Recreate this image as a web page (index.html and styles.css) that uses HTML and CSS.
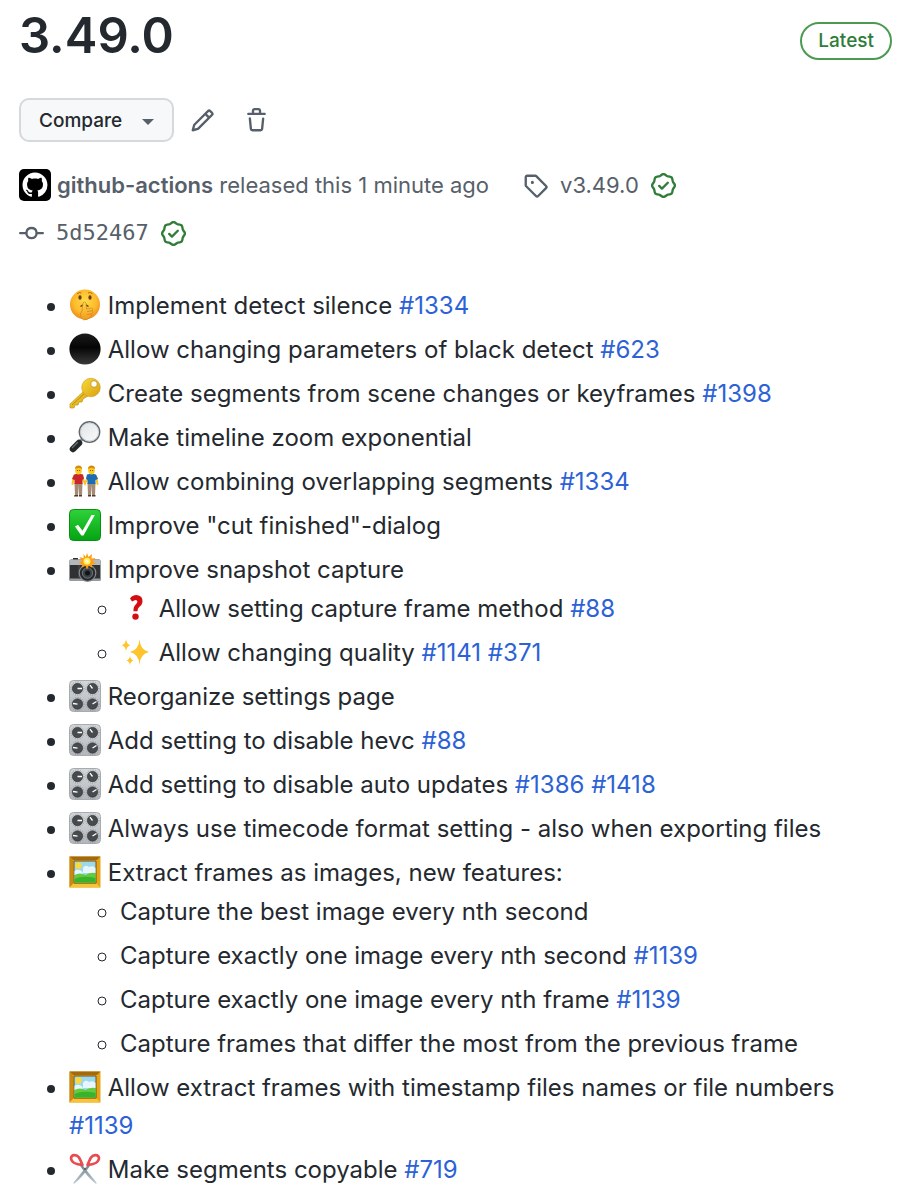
FILE: index.html
```html
<!doctype html>
<html lang="en">

<head>
  <meta charset="UTF-8" />
  <meta name="viewport" content="width=device-width, initial-scale=1.0" />
  <title>Release 3.49.0</title>
  <link rel="stylesheet" href="styles.css">
</head>

<body>
  <!-- shared icons -->
  <svg class="sprite" width="0" height="0" aria-hidden="true">
    <defs>
      <radialGradient id="g-face" cx=".5" cy=".4" r=".6">
        <stop offset="0" stop-color="#ffdc4a" />
        <stop offset=".65" stop-color="#fdb92b" />
        <stop offset="1" stop-color="#ee8a1d" />
      </radialGradient>
      <linearGradient id="g-hand" x1="0" y1="0" x2="0" y2="1">
        <stop offset="0" stop-color="#ffd84d" />
        <stop offset="1" stop-color="#f39a1c" />
      </linearGradient>
      <linearGradient id="g-black" x1="0" y1="0" x2="0" y2="1">
        <stop offset="0" stop-color="#1c1c1c" />
        <stop offset=".45" stop-color="#050505" />
        <stop offset="1" stop-color="#3a3a3a" />
      </linearGradient>
      <linearGradient id="g-gold" x1="0" y1="0" x2="1" y2="1">
        <stop offset="0" stop-color="#f8d935" />
        <stop offset="1" stop-color="#d9a013" />
      </linearGradient>
      <linearGradient id="g-green" x1="0" y1="0" x2="0" y2="1">
        <stop offset="0" stop-color="#2fd23a" />
        <stop offset="1" stop-color="#04a313" />
      </linearGradient>
      <linearGradient id="g-metal" x1="0" y1="0" x2="0" y2="1">
        <stop offset="0" stop-color="#d5d8db" />
        <stop offset="1" stop-color="#b3b7bb" />
      </linearGradient>
      <linearGradient id="g-lens" x1="0" y1="0" x2="1" y2="1">
        <stop offset="0" stop-color="#dfe3e6" />
        <stop offset="1" stop-color="#fbfcfc" />
      </linearGradient>
      <linearGradient id="g-blade" x1="0" y1="0" x2="0" y2="1">
        <stop offset="0" stop-color="#6f7f8b" />
        <stop offset="1" stop-color="#bccbd5" />
      </linearGradient>
    </defs>

    <symbol id="verified" viewBox="0 0 16 16">
      <path fill="currentColor" d="m9.585.52.929.68c.153.112.331.186.518.215l1.138.175a2.678 2.678 0 0 1 2.24 2.24l.174 1.139c.029.187.103.365.215.518l.68.928a2.677 2.677 0 0 1 0 3.17l-.68.928a1.174 1.174 0 0 0-.215.518l-.175 1.138a2.678 2.678 0 0 1-2.241 2.241l-1.138.175a1.17 1.17 0 0 0-.518.215l-.928.68a2.677 2.677 0 0 1-3.17 0l-.928-.68a1.174 1.174 0 0 0-.518-.215L3.83 14.41a2.678 2.678 0 0 1-2.24-2.24l-.175-1.138a1.17 1.17 0 0 0-.215-.518l-.68-.928a2.677 2.677 0 0 1 0-3.17l.68-.928c.112-.153.186-.331.215-.518l.175-1.14a2.678 2.678 0 0 1 2.24-2.24l1.139-.175c.187-.029.365-.103.518-.215l.928-.68a2.677 2.677 0 0 1 3.17 0ZM7.303 1.728l-.927.68a2.67 2.67 0 0 1-1.18.489l-1.137.174a1.179 1.179 0 0 0-.987.987l-.174 1.136a2.677 2.677 0 0 1-.489 1.18l-.68.928a1.18 1.18 0 0 0 0 1.394l.68.927c.256.348.424.753.489 1.18l.174 1.137c.078.509.478.909.987.987l1.136.174a2.67 2.67 0 0 1 1.18.489l.928.68c.414.305.979.305 1.394 0l.927-.68a2.67 2.67 0 0 1 1.18-.489l1.137-.174a1.18 1.18 0 0 0 .987-.987l.174-1.136a2.67 2.67 0 0 1 .489-1.18l.68-.928a1.176 1.176 0 0 0 0-1.394l-.68-.927a2.686 2.686 0 0 1-.489-1.18l-.174-1.137a1.179 1.179 0 0 0-.987-.987l-1.136-.174a2.677 2.677 0 0 1-1.18-.489l-.928-.68a1.176 1.176 0 0 0-1.394 0ZM11.28 6.78l-3.75 3.75a.75.75 0 0 1-1.06 0L4.72 8.78a.751.751 0 0 1 .018-1.042.751.751 0 0 1 1.042-.018L7 8.94l3.22-3.22a.751.751 0 0 1 1.042.018.751.751 0 0 1 .018 1.042Z" />
    </symbol>

    <symbol id="shush" viewBox="0 0 32 32">
      <circle cx="16" cy="15.5" r="15" fill="url(#g-face)" />
      <ellipse cx="11" cy="8.5" rx="1.6" ry="2.2" fill="#6b3d0c" />
      <ellipse cx="21" cy="8.5" rx="1.6" ry="2.2" fill="#6b3d0c" />
      <path d="M8 4.8q2.500-2 4.500-.8M19 4q2.500-1.200 4.500.8" fill="none" stroke="#b3701a" />
      <path d="M11.500 17.500q4-3.500 8 0" fill="none" stroke="#6b3d0c" stroke-width="1.300" />
      <path d="M14 14q1.500-2.500 3 0l.5 6 5-1q2 .5 1 2.500 1 1.500-.5 3-1 4.500-5 6-4 1.500-6-2-1.500-4 1-7z" fill="url(#g-hand)" stroke="#c98420" stroke-width=".7" />
      <path d="M18 22.500l5-.8M18 25.500l4.500-.7" stroke="#c98420" stroke-width=".8" />
    </symbol>

    <symbol id="black-circle" viewBox="0 0 32 32">
      <circle cx="16" cy="16" r="15.600" fill="url(#g-black)" />
    </symbol>

    <symbol id="key" viewBox="0 0 32 32">
      <path d="M16 13 1 27v4h4l1-3h3l1-3h3l1-3 5-3z" fill="url(#g-gold)" stroke="#b58a12" stroke-width=".6" />
      <path d="M3 28 17 15" stroke="#a87d10" stroke-width=".8" />
      <circle cx="22" cy="10.500" r="9.300" fill="url(#g-gold)" stroke="#c99c18" stroke-width=".6" />
      <circle cx="25" cy="7" r="3.300" fill="#fff" stroke="#c0920f" stroke-width=".8" />
    </symbol>

    <symbol id="magnifier" viewBox="0 0 32 32">
      <path d="m15 16-5 6" stroke="#8f969b" stroke-width="3" />
      <path d="m10 22-6 6" stroke="#25282b" stroke-width="6.500" stroke-linecap="round" />
      <path d="m8.500 21.500-5 5" stroke="#6c7175" stroke-width="1.200" stroke-linecap="round" />
      <circle cx="20.500" cy="11" r="10.200" fill="url(#g-lens)" stroke="#62686d" stroke-width="1.400" />
      <circle cx="20.500" cy="11" r="9" fill="none" stroke="#c5cace" stroke-width=".8" />
    </symbol>

    <symbol id="two-men" viewBox="0 0 32 32">
      <path d="M5.500 18h8l-.5 12.500H10L9.500 20 9 30.500H6zM18.500 18h8L26 30.500h-3L22.500 20 22 30.500h-3z" fill="#a38b74" />
      <path d="M5.500 30h3.600v1.500H5zM10 30h3v1.500h-3zM19 30h3v1.500h-3zM23 30h3.500v1.500H23z" fill="#4d3a2c" />
      <path d="M5 11.500 3.500 19M27 11.500l1.500 7.500M13.500 13l2.500 5.500 2.500-5.500" fill="none" stroke="#f8c51f" stroke-width="2" stroke-linecap="round" />
      <path d="M5 9.500q4.500-1.500 9 0l1 4-1.500 1.500v4h-8V15L3 14z" fill="#c9252b" />
      <path d="M18 9.500q4.500-1.500 9 0l2 4.500-2.500 1v4h-8v-4L17 13.500z" fill="#1b6cb4" />
      <ellipse cx="9.500" cy="5.200" rx="3.400" ry="4.200" fill="#fdca24" />
      <ellipse cx="22.500" cy="5.200" rx="3.400" ry="4.200" fill="#fdca24" />
      <path d="M6 4q0-3.500 3.500-3.500T13 4q-3.500-2-7 0zM19 4q0-3.500 3.500-3.500T26 4q-3.500-2-7 0z" fill="#d18d10" />
      <path d="M8 5.500h.8M10.300 5.500h.8M21 5.500h.8M23.300 5.500h.8" stroke="#5a3a0b" />
    </symbol>

    <symbol id="check" viewBox="0 0 32 32">
      <rect x=".5" y=".5" width="31" height="31" rx="4" fill="url(#g-green)" stroke="#078f12" />
      <path d="m6 17.500 3-1.800 4.500 6L22.500 6h3.300L14.500 26.500h-2.200z" fill="#fff" />
    </symbol>

    <symbol id="camera-flash" viewBox="0 0 32 32">
      <path d="M.5 8q0-1.500 1.500-1.500h2V5h5v1.500h21q1.500 0 1.500 1.500v19.500H.5z" fill="#2f3133" />
      <path d="M.5 12V8Q.5 6.500 2 6.500h28q1.500 0 1.500 1.500v4z" fill="#b5b8ba" />
      <path d="M.5 25.500h31v2H.5z" fill="#9a9ea1" />
      <path d="M10 12v13.500" stroke="#505356" />
      <circle cx="18.500" cy="20" r="8.300" fill="#26292b" stroke="#85898c" stroke-width="1.200" />
      <circle cx="18.500" cy="20" r="5.200" fill="#3b4349" stroke="#6c7378" />
      <circle cx="18.500" cy="20" r="2.500" fill="#111517" />
      <path d="m18 0 1.500 4L23 1l-.5 4.500 4-.5-2.700 3.300L27 11l-4.200.2L23.500 15l-3.700-2.300L18 16.500l-1.500-3.800-4 2L13.500 11l-4-.8 3.300-2.500L10.500 4l4.200 1.200L14.500 1l2.300 3z" fill="#ff9d13" />
      <circle cx="18" cy="8.200" r="3.500" fill="#fff05e" />
      <circle cx="18" cy="8.200" r="1.600" fill="#fffbd8" />
    </symbol>

    <symbol id="question" viewBox="0 0 32 32">
      <path d="M10 6.500Q12 3 16.500 3q6.500.5 6 7-.4 3-3.300 5-1.800 1.500-1.700 4.300h-4q-.3-4.500 2-6.500 2-1.700 1.900-3.300-.5-3.200-5.400 0z" fill="#d40d12" />
      <circle cx="15.500" cy="24.600" r="3.200" fill="#d40d12" />
    </symbol>

    <symbol id="sparkles" viewBox="0 0 32 32">
      <path d="M19.500 3.500q.8 10.500 9.500 12.500-8.700 2-9.500 12.500-.8-10.500-9.500-12.500 8.700-2 9.500-12.500z" fill="#fdc52b" />
      <path d="M6 3q.4 5.200 4.500 6.200Q6.400 10.200 6 15.500q-.4-5.300-4.500-6.300Q5.600 8.200 6 3zM10 19.500q.3 4.200 3.800 5-3.500.8-3.800 5-.3-4.200-3.800-5 3.500-.8 3.800-5z" fill="#fdc52b" />
    </symbol>

    <symbol id="knobs" viewBox="0 0 32 32">
      <rect x=".5" y=".5" width="31" height="31" rx="4" fill="url(#g-metal)" stroke="#a7abaf" />
      <g fill="none" stroke="#7d8286" stroke-width=".8" stroke-dasharray=".8 1.600">
        <circle cx="8.500" cy="8.500" r="6.600" />
        <circle cx="23.500" cy="8.500" r="6.600" />
        <circle cx="8.500" cy="24" r="6.600" />
        <circle cx="23.500" cy="24" r="6.600" />
      </g>
      <g fill="#484b4e" stroke="#2f3234" stroke-width=".6">
        <circle cx="8.500" cy="8.500" r="5.200" />
        <circle cx="23.500" cy="8.500" r="5.200" />
        <circle cx="8.500" cy="24" r="5.200" />
        <circle cx="23.500" cy="24" r="5.200" />
      </g>
      <path d="M8.500 8.500H13M23.500 8.500 21 5.200M8.500 24.200 4 23.500M23.500 24l4-2.500" stroke="#fff" stroke-width="1.300" />
    </symbol>

    <symbol id="picture" viewBox="0 0 32 32">
      <path d="M.5.500h31v31H.5z" fill="#e5a51b" />
      <path d="M.5.500h31L28 4H4z" fill="#a2690d" />
      <path d="M.5.500 4 4v24L.5 31.500z" fill="#c88a16" />
      <path d="M.5 31.500 4 28h24l3.500 3.500z" fill="#f6c33a" />
      <path d="M5 5h22v22H5z" fill="#9bd9ee" stroke="#7b500b" />
      <path d="M14 12q2-4 6-1 4-2 6.500 1v5H14zM5.500 15q4-3 8 1v3h-8z" fill="#e8f6fb" />
      <circle cx="9.500" cy="9.500" r="3.200" fill="#fbd93b" />
      <path d="M5.500 19q5-3 11 0 5-3 10-2v9.500h-21z" fill="#63cb3c" />
      <path d="M5.500 23q8-4 21-1v4.500h-21z" fill="#39b32a" />
    </symbol>

    <symbol id="scissors" viewBox="0 0 32 32">
      <path d="M12 10.500 27.500 29.500q.5 1.500-1 1Q19 25 10.500 12z" fill="url(#g-blade)" />
      <path d="M20 10.500 4.500 29.500q-.5 1.500 1 1Q13 25 21.500 12z" fill="url(#g-blade)" />
      <path d="M13.500 12q-1.500-4-3.500-7.500C7.500 1 2.500 1.500 2 5c0 4 5 6.500 11.500 7zM18.500 12q1.500-4 3.500-7.500C24.500 1 29.500 1.500 30 5c0 4-5 6.500-11.500 7z" fill="none" stroke="#e84b52" stroke-width="2.600" stroke-linejoin="round" />
      <circle cx="16" cy="16" r="1" fill="#4b565e" />
    </symbol>
  </svg>

  <main class="release">
    <header class="release-header">
      <h1 class="release-title">3.49.0</h1>
      <a class="label-latest" href="#latest">Latest</a>
    </header>

    <div class="actions">
      <button class="btn-compare" type="button">Compare <span class="caret"></span></button>
      <button class="btn-icon" type="button" aria-label="Edit">
        <svg class="icon" viewBox="0 0 16 16"><path fill="currentColor" d="M11.013 1.427a1.750 1.750 0 0 1 2.474 0l1.086 1.086a1.750 1.750 0 0 1 0 2.474l-8.610 8.610c-.21.21-.47.364-.756.445l-3.251.93a.75.75 0 0 1-.927-.928l.929-3.250c.081-.286.235-.547.445-.758l8.610-8.610Zm.176 4.823L9.750 4.810l-6.286 6.287a.253.253 0 0 0-.064.108l-.558 1.953 1.953-.558a.253.253 0 0 0 .108-.064Zm1.238-3.763a.25.25 0 0 0-.354 0L10.811 3.750l1.439 1.440 1.263-1.263a.25.25 0 0 0 0-.354Z" /></svg>
      </button>
      <button class="btn-icon" type="button" aria-label="Delete">
        <svg class="icon" viewBox="0 0 16 16"><path fill="currentColor" d="M11 1.750V3h2.250a.75.75 0 0 1 0 1.500H2.750a.75.75 0 0 1 0-1.500H5V1.750C5 .784 5.784 0 6.750 0h2.500C10.216 0 11 .784 11 1.750ZM4.496 6.675l.66 6.600a.25.25 0 0 0 .249.225h5.190a.25.25 0 0 0 .249-.225l.66-6.600a.75.75 0 0 1 1.492.149l-.66 6.600A1.748 1.748 0 0 1 10.595 15h-5.190a1.750 1.750 0 0 1-1.741-1.575l-.66-6.600a.75.75 0 1 1 1.492-.15ZM6.500 1.750V3h3V1.750a.25.25 0 0 0-.25-.25h-2.500a.25.25 0 0 0-.25.25Z" /></svg>
      </button>
    </div>

    <div class="meta">
      <div class="meta-row">
        <div class="meta-item meta-author">
          <svg class="avatar" viewBox="0 0 32 32">
            <rect width="32" height="32" rx="5" />
            <path fill="#fff" transform="translate(3.500 3.500) scale(1.560)" d="M8 0C3.580 0 0 3.580 0 8c0 3.540 2.290 6.530 5.470 7.590.4.07.55-.17.55-.38 0-.19-.01-.82-.01-1.490-2.010.37-2.530-.49-2.690-.94-.09-.23-.48-.94-.82-1.130-.28-.15-.68-.52-.01-.53.63-.01 1.080.58 1.230.82.72 1.210 1.870.87 2.330.66.07-.52.28-.87.51-1.070-1.780-.2-3.640-.89-3.640-3.950 0-.87.31-1.590.82-2.150-.08-.2-.36-1.020.08-2.120 0 0 .67-.21 2.200.82.64-.18 1.320-.27 2-.27s1.360.09 2 .27c1.530-1.040 2.200-.82 2.200-.82.44 1.100.16 1.920.08 2.120.51.56.82 1.270.82 2.150 0 3.070-1.870 3.750-3.650 3.950.29.25.54.73.54 1.480 0 1.070-.01 1.930-.01 2.200 0 .21.15.46.55.38A8.010 8.010 0 0 0 16 8c0-4.420-3.580-8-8-8Z" />
          </svg>
          <span><a class="author" href="#github-actions">github-actions</a> released this 1 minute ago</span>
        </div>
        <div class="meta-item">
          <svg class="icon" viewBox="0 0 16 16"><path fill="currentColor" d="M1 7.775V2.750C1 1.784 1.784 1 2.750 1h5.025c.464 0 .91.184 1.238.513l6.250 6.250a1.750 1.750 0 0 1 0 2.474l-5.026 5.026a1.750 1.750 0 0 1-2.474 0l-6.250-6.250A1.752 1.752 0 0 1 1 7.775Zm1.500 0c0 .066.026.13.073.177l6.250 6.250a.25.25 0 0 0 .354 0l5.025-5.025a.25.25 0 0 0 0-.354l-6.250-6.250a.25.25 0 0 0-.177-.073H2.750a.25.25 0 0 0-.25.25ZM6 5a1 1 0 1 1 0 2 1 1 0 0 1 0-2Z" /></svg>
          <a href="#v3.49.0">v3.49.0</a>
          <svg class="icon verified"><use href="#verified" /></svg>
        </div>
      </div>
      <div class="meta-row">
        <div class="meta-item">
          <svg class="icon" viewBox="0 0 16 16"><path fill="currentColor" d="M11.930 8.500a4.002 4.002 0 0 1-7.860 0H.75a.75.75 0 0 1 0-1.500h3.320a4.002 4.002 0 0 1 7.860 0h3.320a.75.75 0 0 1 0 1.500Zm-1.430-.75a2.500 2.500 0 1 0-5 0 2.500 2.500 0 0 0 5 0Z" /></svg>
          <a class="commit" href="#5d52467">5d52467</a>
          <svg class="icon verified"><use href="#verified" /></svg>
        </div>
      </div>
    </div>

    <ul class="notes">
      <li><svg class="emoji"><use href="#shush" /></svg> Implement detect silence <a href="#1334">#1334</a></li>
      <li><svg class="emoji"><use href="#black-circle" /></svg> Allow changing parameters of black detect <a href="#623">#623</a></li>
      <li><svg class="emoji"><use href="#key" /></svg> Create segments from scene changes or keyframes <a href="#1398">#1398</a></li>
      <li><svg class="emoji"><use href="#magnifier" /></svg> Make timeline zoom exponential</li>
      <li><svg class="emoji"><use href="#two-men" /></svg> Allow combining overlapping segments <a href="#1334">#1334</a></li>
      <li><svg class="emoji"><use href="#check" /></svg> Improve "cut finished"-dialog</li>
      <li><svg class="emoji"><use href="#camera-flash" /></svg> Improve snapshot capture
        <ul>
          <li><svg class="emoji"><use href="#question" /></svg> Allow setting capture frame method <a href="#88">#88</a></li>
          <li><svg class="emoji"><use href="#sparkles" /></svg> Allow changing quality <a href="#1141">#1141</a> <a href="#371">#371</a></li>
        </ul>
      </li>
      <li><svg class="emoji"><use href="#knobs" /></svg> Reorganize settings page</li>
      <li><svg class="emoji"><use href="#knobs" /></svg> Add setting to disable hevc <a href="#88">#88</a></li>
      <li><svg class="emoji"><use href="#knobs" /></svg> Add setting to disable auto updates <a href="#1386">#1386</a> <a href="#1418">#1418</a></li>
      <li><svg class="emoji"><use href="#knobs" /></svg> Always use timecode format setting - also when exporting files</li>
      <li><svg class="emoji"><use href="#picture" /></svg> Extract frames as images, new features:
        <ul>
          <li>Capture the best image every nth second</li>
          <li>Capture exactly one image every nth second <a href="#1139">#1139</a></li>
          <li>Capture exactly one image every nth frame <a href="#1139">#1139</a></li>
          <li>Capture frames that differ the most from the previous frame</li>
        </ul>
      </li>
      <li><svg class="emoji"><use href="#picture" /></svg> Allow extract frames with timestamp files names or file numbers <a href="#1139">#1139</a></li>
      <li><svg class="emoji"><use href="#scissors" /></svg> Make segments copyable <a href="#719">#719</a></li>
    </ul>
  </main>
</body>

</html>
```
FILE: styles.css
```css
* {
  box-sizing: border-box;
}

body {
  margin: 0;
  background-color: #fff;
  color: #24292f;
  font-family: Inter, "Liberation Sans", sans-serif;
  font-size: 24px;
  line-height: 38px;
}

a {
  color: #2c62d6;
  text-decoration: none;
}

.sprite {
  position: absolute;
}

.release {
  padding: 6px 19px 8px;
}

.release-header {
  display: flex;
  justify-content: space-between;
  align-items: flex-start;
}

.release-title {
  margin: 0;
  font-size: 49px;
  font-weight: 600;
  line-height: 60px;
}

.label-latest {
  margin-top: 16px;
  padding: 0 16px;
  border: 2px solid #4a9b51;
  border-radius: 20px;
  color: #2f7d39;
  font-size: 19px;
  font-weight: 500;
  line-height: 34px;
}

.actions {
  display: flex;
  align-items: center;
  margin-top: 32px;
}

.btn-compare {
  display: flex;
  align-items: center;
  gap: 20px;
  height: 44px;
  padding: 0 18px;
  border: 2px solid #d5d8dc;
  border-radius: 10px;
  background-color: #f6f8fa;
  color: #24292f;
  font-family: inherit;
  font-size: 19px;
  font-weight: 500;
  cursor: pointer;
}

.caret {
  margin-top: 4px;
  border: 6px solid transparent;
  border-top-color: #57606a;
  border-bottom: 0;
}

.btn-icon {
  display: flex;
  width: 54px;
  padding: 0 16px;
  border: 0;
  background: none;
  color: #57606a;
  cursor: pointer;
}

.icon {
  flex: none;
  width: 25px;
  height: 25px;
}

.meta {
  display: flex;
  flex-direction: column;
  gap: 10px;
  margin-top: 24px;
  color: #57606a;
  font-size: 22px;
}

.meta-row {
  display: flex;
  flex-wrap: wrap;
  gap: 10px 34px;
}

.meta-item {
  display: flex;
  align-items: center;
  gap: 12px;
}

.meta-item a {
  color: inherit;
}

.meta-author {
  gap: 6px;
}

.avatar {
  width: 32px;
  height: 32px;
}

.author {
  font-weight: 600;
}

.commit {
  font-family: "DejaVu Sans Mono", monospace;
}

.meta-item .verified {
  color: #2f7d39;
}

.notes {
  margin: 35px 0 0;
  padding-left: 50px;
}

.notes li + li {
  margin-top: 6px;
}

.notes ul {
  margin: 1px 0;
  padding-left: 51px;
}

.emoji {
  display: inline-block;
  width: 32px;
  height: 32px;
  vertical-align: -7px;
}
```
